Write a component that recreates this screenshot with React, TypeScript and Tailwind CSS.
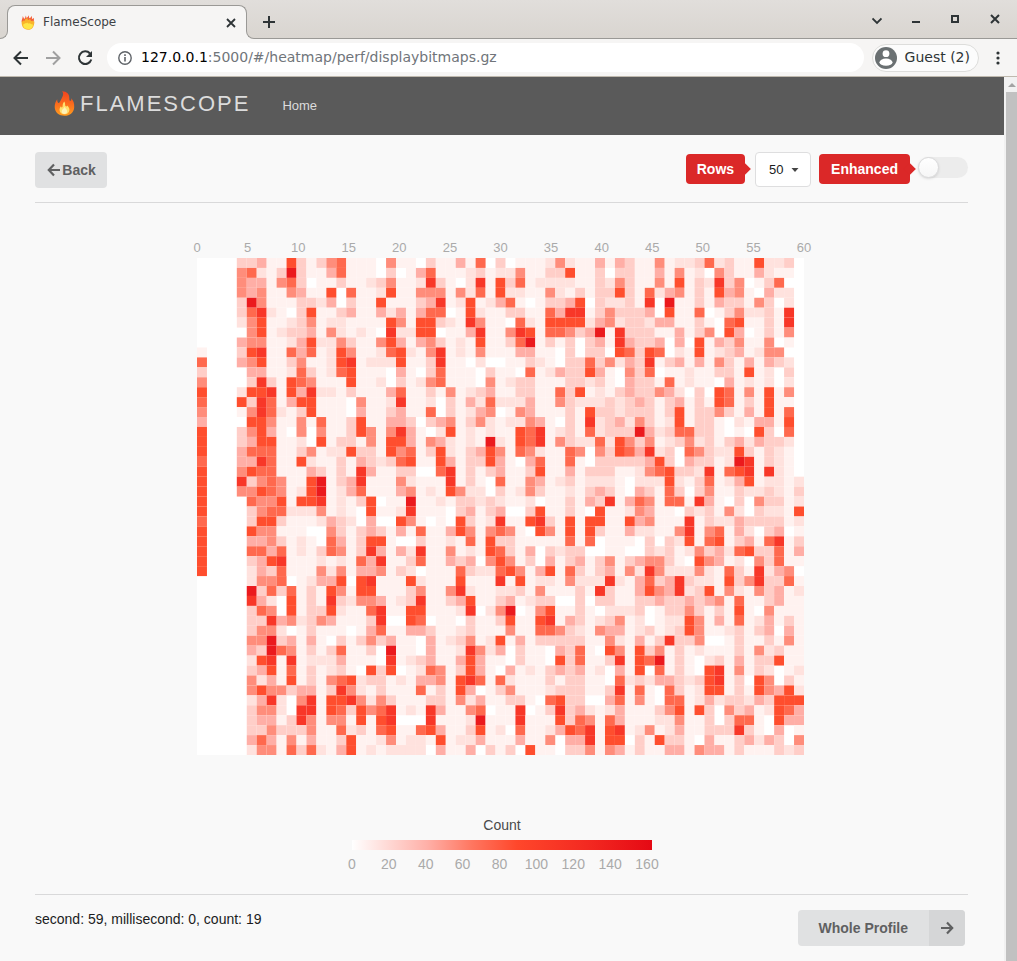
import React from "react";

const COUNTS = [
  "000033411731356" + "111051103114160" + "3011125211414311" + "512236231172230",
  "000056213931146" + "111030146111231" + "2251133711303311" + "415120531142110",
  "000054415630113" + "112351128310281" + "7361222211325311" + "517132835013600",
  "000054511541170" + "611271155515261" + "7221152131337316" + "245131745104220",
  "000039511133240" + "311711134812712" + "4610133470322318" + "091131433153020",
  "000036821037113" + "411424146601721" + "1331164881353334" + "071160135223180",
  "000025711235122" + "111175177321851" + "1062177772452332" + "441131067113180",
  "000005712334152" + "121082277011481" + "1587166534918333" + "114135074013150",
  "000045511247225" + "311574145312171" + "1369131303418433" + "404071435115010",
  "100037811646127" + "511267215812151" + "1144110303307637" + "602171234125500",
  "600045711351127" + "812227113811020" + "0113210336352438" + "134141531414320",
  "300004411263126" + "711104103611103" + "1106124337410536" + "011211331712030",
  "500003831765111" + "711203125611105" + "1233111332310433" + "161211041212020",
  "700027781748221" + "311146113151234" + "1133116371213433" + "542030761517150",
  "600073861477111" + "051128112031426" + "2224115322232343" + "134131761317110",
  "500015862137111" + "041134116031245" + "0154111317332333" + "137133531417160",
  "400007751151611" + "371144303451352" + "1225410318234253" + "127133102144170",
  "700035741050511" + "375158410271212" + "1176812316233394" + "236633101073060",
  "700034771120713" + "315177415421219" + "2176815322627535" + "123523134243320",
  "700046661135122" + "733175613721347" + "5165211650537648" + "230653227313210",
  "600044861172113" + "143236711741337" + "4104611610333334" + "730433129813210",
  "700057661114313" + "184113300681313" + "4113711413331125" + "673328167818210",
  "700083565117913" + "481115211181310" + "6115412312221022" + "272136124712212",
  "700055765127912" + "461114512175220" + "3125311213431043" + "163035113223213",
  "700006557177812" + "137011911213323" + "2112011314381465" + "166184103053312",
  "700003566222512" + "107112811103413" + "4003711310711254" + "110323152032217",
  "600003773111243" + "204007510107312" + "8117831717711745" + "111813224333312",
  "700007551110053" + "134314161147515" + "6510751717311422" + "115815614203401",
  "700004453121064" + "137710031121617" + "3311111616011103" + "032716713416813",
  "700006646121365" + "138414281151217" + "6314032330011003" + "231253426733614",
  "700003478111212" + "164811361143405" + "7513041341351345" + "531075412053611",
  "700002436111525" + "144513201116322" + "6751471631341528" + "522252163182450",
  "000002556012447" + "078111721117111" + "8171221522282146" + "348322173583361",
  "000009363613175" + "177111351158211" + "2231511131831147" + "548237152153412",
  "000008420713183" + "255412381134711" + "3412330030331133" + "433434516113411",
  "000003650713372" + "116811771112802" + "5901571131022230" + "133531317105111",
  "000003384523541" + "113800760110311" + "3711781431235120" + "122751416124131",
  "000003552013111" + "014611443112311" + "1511665321544123" + "123751123134041",
  "000005593414103" + "135341104123512" + "7141333331152141" + "383350013113151",
  "000004396513136" + "113091104112852" + "4031104361075173" + "513121113152311",
  "000002781812224" + "111081234114741" + "1031107361138176" + "913102314133711",
  "000003471613123" + "107370126513741" + "0412134341204170" + "613107815132012",
  "000005241713156" + "723312144517861" + "6211131331106232" + "443237813075031",
  "000005755344138" + "521311161317401" + "3511123331138161" + "063127713175472",
  "000002482058177" + "852531113315241" + "1331067330046151" + "066124233243777",
  "000003552088176" + "375681218411560" + "1180138342124111" + "357173053412764",
  "000003441385155" + "171780008111291" + "1181117365164111" + "225113036610744",
  "000003353335116" + "231671167411371" + "2061124768178125" + "124113338310401",
  "000004641514113" + "711251221712241" + "1141150448177031" + "733104113424305",
  "000002551636214" + "712122220411403" + "1307110335154131" + "144154413111323",
];

const SHADES = [
  "#ffffff",
  "#fff2f0",
  "#ffe2de",
  "#ffcec8",
  "#ffaea6",
  "#ff8d7b",
  "#ff694e",
  "#ff4e2e",
  "#f83728",
  "#eb1a1d",
];

const SECONDS = [0, 5, 10, 15, 20, 25, 30, 35, 40, 45, 50, 55, 60];
const LEGEND = [0, 20, 40, 60, 80, 100, 120, 140, 160];

function Flame({ id, className }: { id: string; className: string }) {
  return (
    <svg viewBox="0 0 20 25" className={className} aria-hidden="true">
      <defs>
        <linearGradient id={id} x1="0" y1="0" x2="0" y2="1">
          <stop offset="0" stopColor="#f0431f" />
          <stop offset="0.5" stopColor="#fb6a1c" />
          <stop offset="1" stopColor="#ff9d1e" />
        </linearGradient>
      </defs>
      <path
        fill={`url(#${id})`}
        d="M7.6 0.3C12 0.2 15.2 3.4 14.8 7.4c-.1 1.7.5 2.7 1.4 2.4.7-.3.8-1.3.3-2.6 2.4 2.1 3.4 5.2 3.2 9C19.400 21.500 15.500 24.800 10 24.800S.4 21.400.2 16.300C.1 13 1.200 10.300 2.700 8.300c0 2 .4 3.300 1.300 3.600 1.300.3 1.600-1.400 2.600-3.300C8.200 5.600 9.700 3 7.600.3Z"
      />
      <path
        fill="#ffdf6d"
        d="M9.800 10.400c1.400 2 .4 3.600 1.200 4.600.6.900 1.500.4 1.500-.6 1.800 1.500 2.500 2.900 2.400 4.500-.2 2.800-2.200 4.300-4.900 4.300s-4.900-1.500-5-4.300c0-1.500.6-2.700 1.500-3.700.2 1.200.7 1.500 1.200 1.100 1-.9-.3-3.200 2.100-5.900Z"
      />
      <path fill="#fff2b8" d="M10.400 15.500c-.2 2 2.200 2.400 2.200 4.700 0 1.700-1.200 2.700-2.700 2.700s-2.700-1-2.700-2.500c0-2.200 2.300-2.400 3.200-4.900Z" />
    </svg>
  );
}

function TabFlame() {
  return (
    <svg viewBox="0 0 14 15" className="h-[15px] w-[14px]" aria-hidden="true">
      <path
        fill="#f4623a"
        d="M1.800 1l.7 1.600L3.200 4l1-1.300L4.800.6l.8 2.400L7 1.800l.9-1.600.3 3 1.500-.8 1.300-1.600-.1 2.700.9.600.9-1.400c.6 1.300 0 2.300.2 3.800-3.800 2.200-8 2.300-12.300.2C.5 4.800 1.800 3.300 1.800 1Z"
      />
      <path
        fill="#f9b42b"
        d="M.6 6.500c.8.300 1.300-.3 1.700-1.200.3.800.9 1 1.300.2.500-1.100 1.200-2 2.900-2.500-.2 1.500.6 2.300 1.300 1.900.5-.3.8-.7.900-1.200.9.700.8 1.700 1.500 2.200.5.300.9-.1 1.100-.5.500.8 1.100 1.300 2.100 1-.1 4.900-1.900 8.300-6.400 8.300S.5 11.300.6 6.500Z"
      />
      <path fill="#ffe646" d="M2 9.500c1.100.1 1.500-1.500 2.400-1.300.8.200 1.100.4 1.800-.6.8 1.100 1.400 1 2.100.7.800-.2 1.600 1.200 3.700 1.100-.2 3.300-2 4.700-5 4.700s-4.800-1.400-5-4.600Z" />
    </svg>
  );
}

function BrowserChrome() {
  return (
    <header className="font-['DejaVu_Sans',sans-serif] text-[#2e3436]">
      <div className="flex h-[39px] items-end border-b border-[#9a9996] bg-linear-to-b from-[#e1dedb] to-[#d9d5d0]">
        <div className="relative -mb-px ml-[7px] flex h-[34px] w-[240px] items-center rounded-t-lg border border-b-0 border-[#9a9996] bg-[#f6f5f4] pr-[10px] pl-[13px]">
          <span className="absolute right-full bottom-0 size-2 overflow-hidden bg-[#f6f5f4]">
            <span className="block size-2 rounded-br-lg border-r border-b border-[#9a9996] bg-[#dad6d1]" />
          </span>
          <span className="absolute bottom-0 left-full size-2 overflow-hidden bg-[#f6f5f4]">
            <span className="block size-2 rounded-bl-lg border-b border-l border-[#9a9996] bg-[#dad6d1]" />
          </span>
          <TabFlame />
          <span className="ml-2 flex-1 pb-[2px] text-[12px] text-[#3d4144]">FlameScope</span>
          <button type="button" aria-label="Close tab" className="flex size-[10px] items-center justify-center">
            <svg viewBox="0 0 10 10" className="size-[10px]" stroke="#2e3436" strokeWidth="1.8">
              <path d="M1 1l8 8M9 1l-8 8" />
            </svg>
          </button>
        </div>
        <button type="button" aria-label="New tab" className="mb-[10px] ml-4">
          <svg viewBox="0 0 12 12" className="size-3" stroke="#2e3436" strokeWidth="2">
            <path d="M6 0v12M0 6h12" />
          </svg>
        </button>
        <div className="mr-[17px] mb-3 ml-auto flex items-center gap-[30px]">
          <button type="button" aria-label="Search tabs">
            <svg viewBox="0 0 10 10" className="mt-1 size-[10px]" fill="none" stroke="#2e3436" strokeWidth="1.800">
              <path d="M0.500 2.500l4.500 4.500 4.500-4.500" />
            </svg>
          </button>
          <button type="button" aria-label="Minimize">
            <svg viewBox="0 0 8 10" className="h-[10px] w-2" fill="#2e3436">
              <path d="M0 7h8v2H0z" />
            </svg>
          </button>
          <button type="button" aria-label="Maximize">
            <svg viewBox="0 0 10 10" className="size-[10px]" fill="none" stroke="#2e3436" strokeWidth="2">
              <path d="M2 2h6v6H2z" />
            </svg>
          </button>
          <button type="button" aria-label="Close window">
            <svg viewBox="0 0 10 10" className="size-[10px]" stroke="#2e3436" strokeWidth="2">
              <path d="M1 1l8 8M9 1l-8 8" />
            </svg>
          </button>
        </div>
      </div>
      <div className="flex h-[38px] items-center border-b border-[#bfb9ae] bg-[#f6f5f4] pr-[17px] pl-[13px]">
        <button type="button" aria-label="Go back">
          <svg viewBox="0 0 16 16" className="size-4" fill="none" stroke="#2e3436" strokeWidth="2">
            <path d="M15 8H2M8 1.500L1.500 8 8 14.500" />
          </svg>
        </button>
        <button type="button" aria-label="Go forward" className="ml-4">
          <svg viewBox="0 0 16 16" className="size-4" fill="none" stroke="#a0a0a0" strokeWidth="2">
            <path d="M1 8h13M8 1.500L14.500 8 8 14.500" />
          </svg>
        </button>
        <button type="button" aria-label="Reload" className="ml-4">
          <svg viewBox="0 0 16 16" className="size-4" fill="none" stroke="#2e3436" strokeWidth="2">
            <path d="M13 3.500A6.300 6.300 0 1 0 14.300 9.500" />
            <path d="M15 1v6H9z" fill="#2e3436" stroke="none" />
          </svg>
        </button>
        <div className="ml-[14px] flex h-[29px] flex-1 items-center gap-[9px] rounded-full bg-white pl-[11px]">
          <svg viewBox="0 0 14 14" className="size-[14px]" fill="none" stroke="#5f6368" strokeWidth="1.400">
            <circle cx="7" cy="7" r="6.200" />
            <path d="M7 6v4.500M7 3.300v1.700" strokeWidth="1.600" />
          </svg>
          <div role="textbox" aria-label="Address" className="text-[14px] text-[#70757a]">
            <span className="text-black">127.0.0.1</span>:5000/#/heatmap/perf/displaybitmaps.gz
          </div>
        </div>
        <button
          type="button"
          className="ml-2 flex h-[28px] items-center gap-2 rounded-full border border-[#dddddb] bg-[#fcfcfc] pr-2 pl-[2px] text-[14px] text-[#2e3436]"
        >
          <svg viewBox="0 0 22 22" className="size-[22px]">
            <circle cx="11" cy="11" r="11" fill="#6a7072" />
            <circle cx="11" cy="6.700" r="3.400" fill="#fff" />
            <ellipse cx="11" cy="15.200" rx="6.500" ry="3.600" fill="#fff" />
          </svg>
          Guest (2)
        </button>
        <button type="button" aria-label="Menu" className="ml-[17px]">
          <svg viewBox="0 0 4 14" className="h-[14px] w-1" fill="#2e3436">
            <circle cx="2" cy="2" r="1.600" />
            <circle cx="2" cy="7" r="1.600" />
            <circle cx="2" cy="12" r="1.600" />
          </svg>
        </button>
      </div>
    </header>
  );
}

function Heatmap() {
  return (
    <svg width="641" height="519" className="mx-auto mt-[33px] block" role="img" aria-label="Heatmap">
      <g fill="#aaaaaa" fontSize="13" textAnchor="middle">
        {SECONDS.map((s) => (
          <text key={s} x={16 + (s * 607) / 60} y="16">
            {s}
          </text>
        ))}
      </g>
      <svg x="16" y="22" width="607" height="497" viewBox="0 0 61 50" preserveAspectRatio="none">
        <rect width="61" height="50" fill="#ffffff" />
        {COUNTS.map((row, y) =>
          row.split("").map((level, x) =>
            level === "0" ? null : (
              <rect key={`${x}-${y}`} x={x} y={y} width="1" height="1" fill={SHADES[Number(level)]} />
            ),
          ),
        )}
      </svg>
    </svg>
  );
}

function Legend() {
  return (
    <svg width="641" height="60" className="mx-auto mt-[60px] block" role="img" aria-label="Count legend">
      <defs>
        <linearGradient id="count-scale">
          <stop offset="0" stopColor="#ffffff" />
          <stop offset="0.250" stopColor="#ffb0a8" />
          <stop offset="0.400" stopColor="#ff7660" />
          <stop offset="0.550" stopColor="#ff472b" />
          <stop offset="0.800" stopColor="#f22720" />
          <stop offset="1" stopColor="#e50914" />
        </linearGradient>
      </defs>
      <text x="321" y="15" fontSize="14" textAnchor="middle" fill="#4a4a4a">
        Count
      </text>
      <rect x="171" y="25" width="300" height="10" fill="url(#count-scale)" />
      <g fill="#aaaaaa" fontSize="14" textAnchor="middle">
        {LEGEND.map((n) => (
          <text key={n} x={171 + (n * 295) / 160} y="54">
            {n}
          </text>
        ))}
      </g>
    </svg>
  );
}

const ribbon =
  "relative flex h-[30px] items-center rounded bg-[#db2828] text-[14px] font-bold text-white after:absolute after:top-1/2 after:-right-1 after:size-[9px] after:-translate-y-1/2 after:rotate-45 after:bg-[#db2828]";

export default function App() {
  return (
    <div className="flex min-h-screen flex-col bg-[#f9f9f9]">
      <BrowserChrome />
      <div className="flex flex-1">
        <div className="flex-1 font-['Liberation_Sans',Arial,sans-serif] text-[14px] text-[#1b1c1d]">
          <nav className="flex h-[58px] items-center bg-[#5a5a5a] pl-[54px]">
            <a href="#/" className="-mt-[5px] flex items-center gap-[5px] text-[22px] tracking-[2px] text-[#dcdcdc]">
              <Flame id="logo-flame" className="h-[25px] w-[21px]" />
              FLAMESCOPE
            </a>
            <a href="#/" className="ml-8 text-[13px] text-[#dcdcdc]">
              Home
            </a>
          </nav>
          <main className="pr-9 pb-4 pl-[35px]">
            <div className="flex justify-between border-b border-[#d9d9da] pt-[17px] pb-[14px]">
              <button
                type="button"
                className="flex h-9 w-[72px] items-center justify-center gap-px rounded bg-[#e0e1e2] pl-px font-bold text-[#5f6061]"
              >
                <svg viewBox="0 0 14 14" className="size-[14px]" fill="none" stroke="#5f6061" strokeWidth="2.200">
                  <path d="M13 7H2.500M7 1.500L1.800 7 7 12.500" />
                </svg>
                Back
              </button>
              <div className="flex items-start">
                <label htmlFor="rows" className={`${ribbon} mt-[2px] px-[11px]`}>
                  Rows
                </label>
                <div className="relative ml-[10px]">
                  <select
                    id="rows"
                    defaultValue="50"
                    className="h-[35px] w-14 appearance-none rounded border border-[#dededf] bg-white pl-[13px] text-[13px] text-[#1b1c1d]"
                  >
                    <option>50</option>
                    <option>20</option>
                    <option>100</option>
                  </select>
                  <svg viewBox="0 0 8 4" className="pointer-events-none absolute top-4 right-3 h-1 w-2" fill="#444444">
                    <path d="M0.500 0h7L4 4z" />
                  </svg>
                </div>
                <label htmlFor="enhanced" className={`${ribbon} mt-[2px] ml-2 px-3`}>
                  Enhanced
                </label>
                <input
                  id="enhanced"
                  type="checkbox"
                  className="relative mt-[5px] ml-2 h-[21px] w-[50px] appearance-none rounded-full bg-[#ececec] before:absolute before:top-0 before:left-0 before:size-[21px] before:rounded-full before:border before:border-[#d9d9da] before:bg-linear-to-b before:from-white before:to-[#f6f6f6] before:shadow-sm"
                />
              </div>
            </div>
            <Heatmap />
            <Legend />
            <div className="mt-[19px] flex items-start justify-between border-t border-[#d9d9da] pt-[15px] pr-[3px]">
              <p className="leading-[18px]">second: 59, millisecond: 0, count: 19</p>
              <button
                type="button"
                className="flex h-9 items-stretch overflow-hidden rounded bg-[#e0e1e2] font-bold text-[#5f6061]"
              >
                <span className="flex items-center px-[21px]">Whole Profile</span>
                <span className="flex w-9 items-center justify-center bg-[#d5d6d7]">
                  <svg viewBox="0 0 14 14" className="size-[14px]" fill="none" stroke="#5f6061" strokeWidth="2.200">
                    <path d="M1 7h10.500M7 1.500L12.200 7 7 12.500" />
                  </svg>
                </span>
              </button>
            </div>
          </main>
        </div>
        <div className="flex w-[13px] flex-col bg-[#f1f1f1] pl-[2px]">
          <div className="flex h-[15px] items-center justify-center">
            <svg viewBox="0 0 8 4" className="h-1 w-2" fill="#a3a3a3">
              <path d="M4 0l4 4H0z" />
            </svg>
          </div>
          <div className="flex-1 bg-[#c1c1c1]" />
        </div>
      </div>
    </div>
  );
}
